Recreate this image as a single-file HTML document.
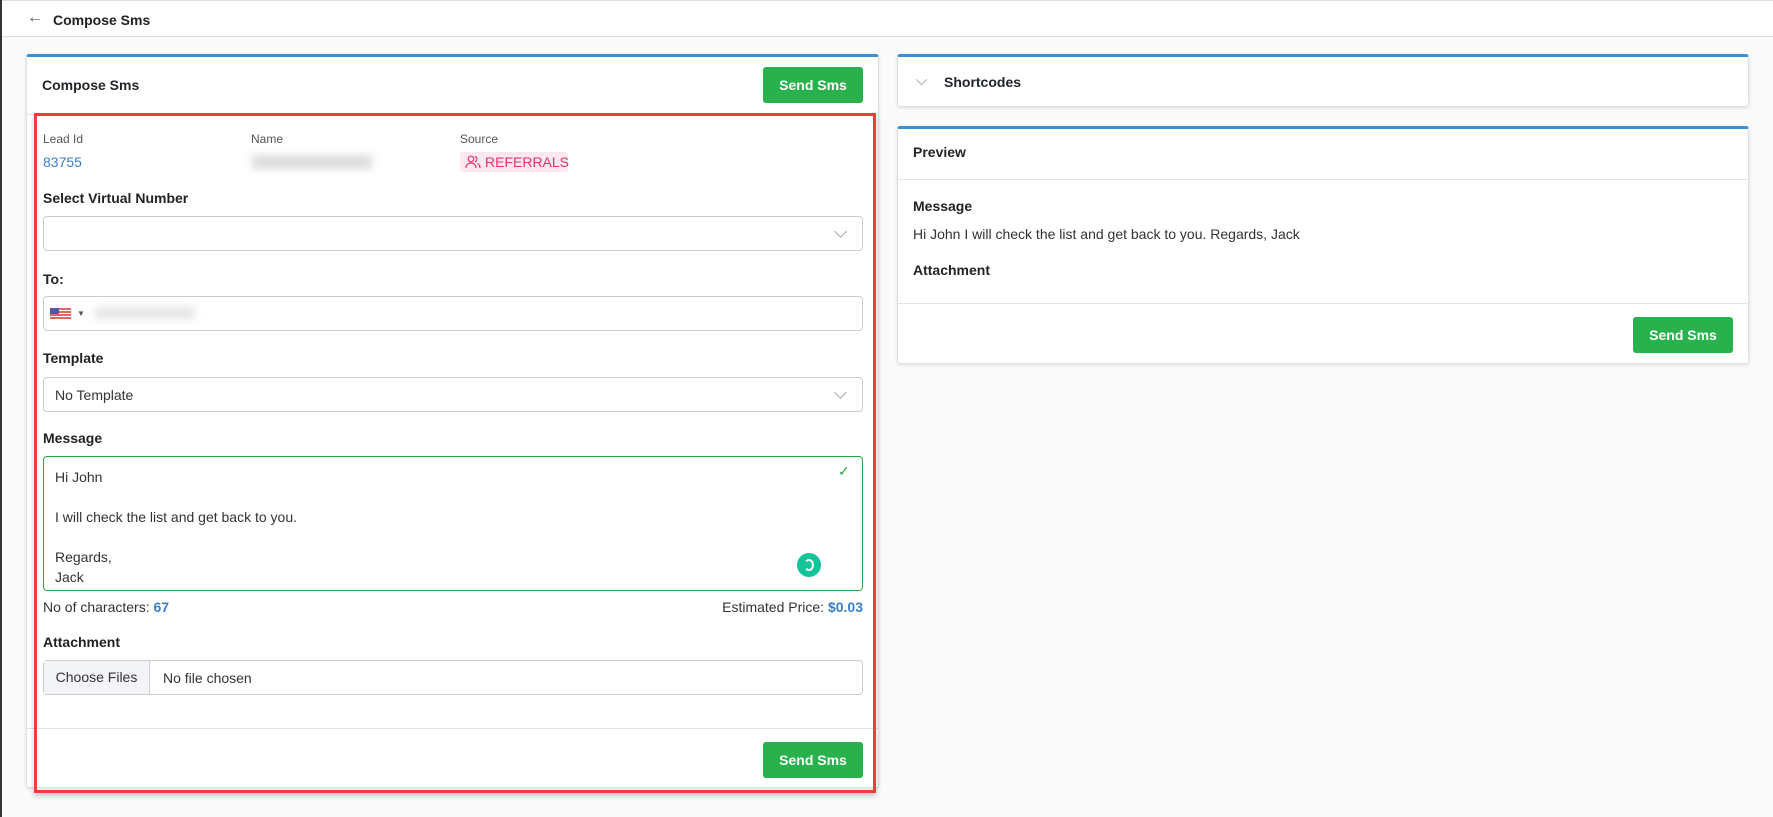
<!DOCTYPE html>
<html><head><meta charset="utf-8"><style>
*{box-sizing:border-box;margin:0;padding:0}
body{width:1773px;height:817px;background:#fafafa;font-family:"Liberation Sans",sans-serif;color:#212529;position:relative;overflow:hidden;font-size:14px}
.a{position:absolute}
.card{position:absolute;background:#fff;border:1px solid #e0e0e0;border-top:3px solid #3a8fd9;border-radius:3px;box-shadow:0 1px 3px rgba(0,0,0,.12)}
.btn{position:absolute;background:#28b14c;color:#fff;border-radius:3px;font-weight:bold;font-size:14px;text-align:center}
.lbl{position:absolute;font-size:14px;font-weight:bold;color:#222}
.inp{position:absolute;border:1px solid #ccc;border-radius:4px;background:#fff}
.small{position:absolute;font-size:12px;color:#555}
.chev{position:absolute;width:9px;height:9px;border-right:1px solid #aaa;border-bottom:1px solid #aaa;transform:rotate(45deg)}
</style></head><body>
<div class="a" style="left:0;top:0;width:2px;height:817px;background:#333"></div>
<div class="a" style="left:2px;top:0;right:0;height:37px;background:#fff;border-top:1px solid #ddd;border-bottom:1px solid #ddd"></div>
<div class="a" style="left:27px;top:9px;font-size:16px;color:#555">&#8592;</div>
<div class="a" style="left:53px;top:12px;font-size:14px;font-weight:bold;color:#222">Compose Sms</div>

<div class="card" style="left:26px;top:54px;width:853px;height:734px"></div>
<div class="a" style="left:42px;top:77px;font-size:14px;font-weight:bold">Compose Sms</div>
<div class="btn" style="left:763px;top:67px;width:100px;height:36px;line-height:36px">Send Sms</div>
<div class="a" style="left:27px;top:114px;width:851px;height:1px;background:#e3e3e3"></div>

<div class="small" style="left:43px;top:132px">Lead Id</div>
<div class="a" style="left:43px;top:154px;font-size:14px;color:#3a7fc4">83755</div>
<div class="small" style="left:251px;top:132px">Name</div>
<div class="a" style="left:252px;top:155px;width:120px;height:14px;background:#ddd;filter:blur(4px)"></div>
<div class="small" style="left:460px;top:132px">Source</div>
<div class="a" style="left:460px;top:152px;width:108px;height:20px;background:#fde8ef;border-radius:3px;color:#e0336a;font-size:14px;line-height:20px;padding-left:25px">REFERRALS</div>
<svg class="a" style="left:465px;top:155px" width="16" height="14" viewBox="0 0 16 14" fill="none" stroke="#e0336a" stroke-width="1.2"><circle cx="6" cy="4" r="2.8"/><path d="M1 13c0-3 2-5 5-5s5 2 5 5M10 1.5a2.8 2.8 0 010 5.3M12.5 8.5c1.5.7 2.5 2.3 2.5 4.5"/></svg>

<div class="lbl" style="left:43px;top:190px">Select Virtual Number</div>
<div class="inp" style="left:43px;top:216px;width:820px;height:35px"></div>
<div class="chev" style="left:836px;top:227px"></div>

<div class="lbl" style="left:43px;top:271px">To:</div>
<div class="inp" style="left:43px;top:296px;width:820px;height:35px"></div>
<div class="a" style="left:50px;top:308px;width:21px;height:12px;background:repeating-linear-gradient(#d66 0 2px,#fff 2px 3px)"></div>
<div class="a" style="left:50px;top:308px;width:9px;height:6px;background:#55a"></div>
<div class="a" style="left:77px;top:309px;font-size:8px;color:#555">&#9660;</div>
<div class="a" style="left:95px;top:307px;width:100px;height:12px;background:#e5e5e5;filter:blur(4px)"></div>

<div class="lbl" style="left:43px;top:350px">Template</div>
<div class="inp" style="left:43px;top:377px;width:820px;height:35px"></div>
<div class="a" style="left:55px;top:387px;font-size:14px;color:#333">No Template</div>
<div class="chev" style="left:836px;top:388px"></div>

<div class="lbl" style="left:43px;top:430px">Message</div>
<div class="inp" style="left:43px;top:456px;width:820px;height:135px;border-color:#28a745"></div>
<div class="a" style="left:55px;top:467px;font-size:14px;line-height:20px;color:#333">Hi John<br><br>I will check the list and get back to you.<br><br>Regards,<br>Jack</div>
<div class="a" style="left:838px;top:463px;color:#28a745;font-size:14px">&#10003;</div>
<div class="a" style="left:797px;top:553px;width:24px;height:24px;border-radius:50%;background:#15c39a"></div>
<div class="a" style="left:804px;top:559px;width:10px;height:12px;border:2px solid #fff;border-left-color:transparent;border-radius:50%"></div>

<div class="a" style="left:43px;top:599px;font-size:14px;color:#333">No of characters: <span style="color:#3a7fc4;font-weight:bold">67</span></div>
<div class="a" style="left:563px;width:300px;text-align:right;top:599px;font-size:14px;color:#333">Estimated Price: <span style="color:#3a7fc4;font-weight:bold">$0.03</span></div>

<div class="lbl" style="left:43px;top:634px">Attachment</div>
<div class="inp" style="left:43px;top:660px;width:820px;height:35px;overflow:hidden"></div>
<div class="a" style="left:44px;top:661px;width:106px;height:33px;background:#f3f4f7;border-right:1px solid #ccc;font-size:14px;line-height:33px;text-align:center;color:#333">Choose Files</div>
<div class="a" style="left:163px;top:670px;font-size:14px;color:#333">No file chosen</div>

<div class="a" style="left:27px;top:728px;width:851px;height:1px;background:#e3e3e3"></div>
<div class="btn" style="left:763px;top:742px;width:100px;height:36px;line-height:36px">Send Sms</div>

<div class="a" style="left:34px;top:113px;width:842px;height:680px;border:3px solid #f03e3e;box-shadow:0 3px 5px rgba(0,0,0,.2)"></div>

<div class="card" style="left:897px;top:54px;width:852px;height:53px"></div>
<div class="chev" style="left:917px;top:75px;transform:rotate(45deg) scale(.9)"></div>
<div class="a" style="left:944px;top:74px;font-size:14px;font-weight:bold">Shortcodes</div>

<div class="card" style="left:897px;top:126px;width:852px;height:238px"></div>
<div class="a" style="left:913px;top:144px;font-size:14px;font-weight:bold">Preview</div>
<div class="a" style="left:898px;top:179px;width:850px;height:1px;background:#e3e3e3"></div>
<div class="lbl" style="left:913px;top:198px">Message</div>
<div class="a" style="left:913px;top:226px;font-size:14px;color:#333">Hi John I will check the list and get back to you. Regards, Jack</div>
<div class="lbl" style="left:913px;top:262px">Attachment</div>
<div class="a" style="left:898px;top:303px;width:850px;height:1px;background:#e3e3e3"></div>
<div class="btn" style="left:1633px;top:317px;width:100px;height:36px;line-height:36px">Send Sms</div>
</body></html>
